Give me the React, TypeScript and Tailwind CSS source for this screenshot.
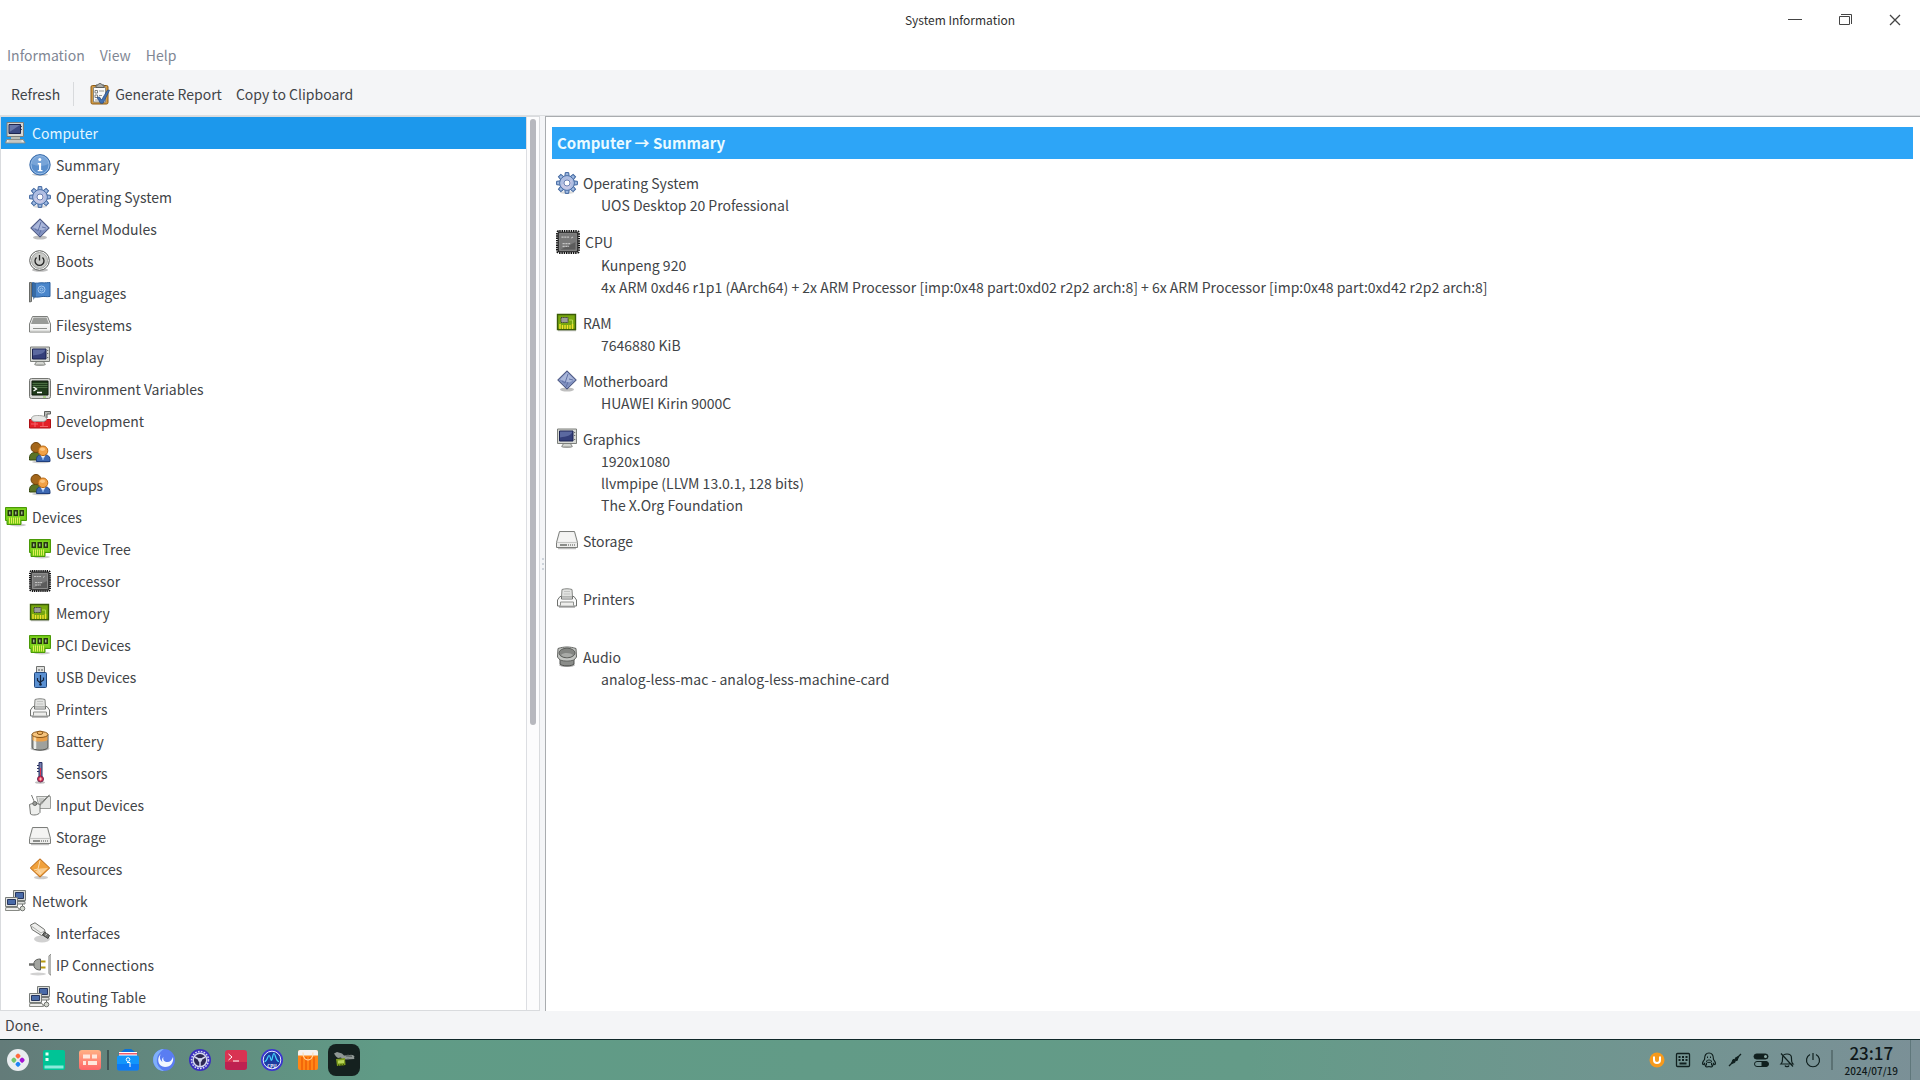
import React, { useState } from 'react';

type IconName =
  | 'computer' | 'info' | 'gear' | 'module' | 'boot' | 'flag' | 'drive' | 'display' | 'terminal'
  | 'devel' | 'users' | 'card' | 'cpu' | 'memory' | 'usb' | 'printer' | 'battery' | 'sensor'
  | 'input' | 'storage' | 'resources' | 'network' | 'interface' | 'plug' | 'audio' | 'report';

const GEAR_TEETH = [0, 45, 90, 135, 180, 225, 270, 315];

const cardArt = (
  <>
    <ellipse cx="13" cy="19" rx="8" ry="1.5" fill="#000" opacity=".2" />
    <path d="M.5 1.500h21v13h-5.500v4h-14v-4H.5z" fill="#73c916" stroke="#4a9a06" />
    <path d="M2 3h18v10H2z" fill="#86d926" opacity=".6" />
    <path d="M2.500 4h4.500v6H2.500zM8.500 4H13v6H8.500zM14.500 4H19v6h-4.500z" fill="#25370f" />
    <path d="M4 5.500h1.500v3H4zM10 5.500h1.500v3H10zM16 5.500h1.500v3H16z" fill="#9fb18c" />
    <path d="M4.500 11.500v6M6.500 11.500v6M8.500 11.500v6M10.500 11.500v6M12.500 11.500v6M14.500 11.500v6" stroke="#e2ee58" />
  </>
);

const monitorPair = (
  <>
    <path d="M8.500.500h12v10h-12z" fill="#d8dad6" stroke="#777b78" />
    <path d="M10.500 2.500h8v6h-8z" fill="#4a6ba8" stroke="#27365f" />
    <path d="M10 11.500h10v2.500H10z" fill="#dcdedb" stroke="#777b78" />
    <path d="M.5 7.500h12v9H.5z" fill="#e3e4e2" stroke="#777b78" />
    <path d="M2.500 9.500h8v5h-8z" fill="#4a6ba8" stroke="#27365f" />
    <path d="M.8 17.500h12.400l1.300 3H.5z" fill="#eeeeec" stroke="#888a85" />
    <circle cx="17.500" cy="18.500" r="2.300" fill="#d3d7cf" stroke="#6f726e" />
    <path d="M17.500 14v2M14 19h1" stroke="#6f726e" />
  </>
);

const ICONS: Record<IconName, React.ReactNode> = {
  computer: (
    <>
      <path d="M2 .500h16.500v14H2z" fill="#d6d7d4" stroke="#7b7d7a" />
      <path d="M4 2.500h11.500v9H4z" fill="#3c4b85" stroke="#1d2550" />
      <path d="M4.500 3h10.500l-10.500 7z" fill="#8b9cc8" opacity=".55" />
      <path d="M16.500 4v1M16.500 7v1" stroke="#555" />
      <path d="M6 15h9v2H6z" fill="#babdb6" />
      <path d="M1.800 17.500h16.400l2 3.500H.5z" fill="#e6e6e3" stroke="#888a85" />
      <path d="M3.500 19h13" stroke="#a5a7a2" />
    </>
  ),
  info: (
    <>
      <ellipse cx="11" cy="20.500" rx="8" ry="1.500" fill="#000" opacity=".2" />
      <circle cx="11" cy="10.800" r="10.200" fill="#5a8fcd" stroke="#3a6caa" />
      <circle cx="11" cy="10.800" r="9" fill="none" stroke="#9bbfe8" />
      <path d="M2.500 10a8.500 8.500 0 0 1 17 0c-5 2.500-11 2.500-17 0z" fill="#8ab2e0" opacity=".6" />
      <circle cx="10.800" cy="5.500" r="1.500" fill="#fff" />
      <path d="M8.800 9h3.300v7h1.400v1.300H8.700V16H10v-5.600H8.800z" fill="#fff" />
    </>
  ),
  gear: (
    <>
      <ellipse cx="11" cy="20.500" rx="7" ry="1.300" fill="#000" opacity=".15" />
      {GEAR_TEETH.map((a) => (
        <path key={a} d="M8.800 5 9.300.600h3.400l.5 4.400z" fill="#9db8e0" stroke="#3f659f" transform={`rotate(${a} 11 11)`} />
      ))}
      <circle cx="11" cy="11" r="7.300" fill="#a4b8de" stroke="#4468a0" />
      <circle cx="11" cy="11" r="6.700" fill="#afbee2" />
      <path d="M5 13a6 6 0 0 0 9 3l2-8z" fill="#cdcae6" opacity=".8" />
      <circle cx="11" cy="11" r="3" fill="#fff" stroke="#6d82b3" />
    </>
  ),
  module: (
    <>
      <ellipse cx="11" cy="19.500" rx="7" ry="2" fill="#000" opacity=".25" />
      <path d="M11 .800 20.300 10 11 19.200 1.700 10z" fill="#8090bf" stroke="#3b4672" />
      <path d="M11 2.500 18.500 10 13 12.500 8 11 4 9.500z" fill="#aab7da" />
      <path d="M12 4 9 13l-3-2M12 12l-2 5M13 9l4 1" stroke="#6273a6" fill="none" />
    </>
  ),
  boot: (
    <>
      <ellipse cx="11" cy="20" rx="8" ry="1.800" fill="#000" opacity=".25" />
      <circle cx="10.500" cy="10.500" r="9.800" fill="#fafafa" stroke="#595b58" />
      <circle cx="10.500" cy="10.500" r="8" fill="#c9cac7" stroke="#a0a29f" />
      <path d="M7.500 7.500a4.500 4.500 0 1 0 6 0M10.500 5v5.500" fill="none" stroke="#222" strokeWidth="1.300" />
    </>
  ),
  flag: (
    <>
      <path d="M.5.500h2v19l-2 .5z" fill="#9b9d99" stroke="#686a67" />
      <path d="M3.500.500c4 1.500 7 0 9.500.300 3 .3 6-.3 8-.3v14c-4 .5-6-.5-9 .2-3 .6-5 .5-8.500 0z" fill="#4a86cb" stroke="#2b5f9e" />
      <path d="M4 1h3v13.500L4 18z" fill="#2c5a8c" opacity=".6" />
      <circle cx="12.500" cy="7.500" r="3.500" fill="none" stroke="#a4c8ef" />
      <circle cx="12.500" cy="7.500" r="1.500" fill="none" stroke="#a4c8ef" />
    </>
  ),
  drive: (
    <>
      <path d="M3.500 2.500h15L21.500 10v8h-21v-8z" fill="#f1f1f0" stroke="#7c7e7b" />
      <path d="M4.500 3.500h13l2.500 6.500H2z" fill="#999b98" />
      <path d="M1 11h20" stroke="#fff" />
      <path d="M4 14.500h14" stroke="#8b8d8a" />
      <path d="M1 17h20" stroke="#cfd0ce" />
    </>
  ),
  display: (
    <>
      <ellipse cx="11" cy="18.500" rx="6" ry="1.500" fill="#000" opacity=".3" />
      <path d="M7 15h8v2c1.500.300 1.500 2-.500 2h-7c-2 0-2-1.700-.5-2z" fill="#d3d5d1" stroke="#888a85" />
      <path d="M1.500 1h19v14.500h-19z" fill="#d6d8d4" stroke="#7c7f7b" />
      <path d="M3.500 3h13.500v10H3.500z" fill="#343f7a" stroke="#1b2350" />
      <path d="M4 3.500h12.500c-1 4-6 5-12.500 6z" fill="#7c8cc0" opacity=".55" />
      <path d="M18.700 4v1M18.700 7v1M18.700 11v1" stroke="#555" />
    </>
  ),
  terminal: (
    <>
      <rect x=".5" y=".500" width="21" height="20" rx="2" fill="#d5d6d3" stroke="#747672" />
      <path d="M3 3h16v14H3z" fill="#1e3a1a" stroke="#0e1a0c" />
      <path d="M3.500 5.500h15M3.500 7.500h15M3.500 9.500h15" stroke="#4a6e42" />
      <path d="M4.500 9 7.500 11l-3 2M8 14.500h5" stroke="#fff" fill="none" strokeWidth="1.300" />
      <path d="M14 19h3" stroke="#7ecb3b" />
    </>
  ),
  devel: (
    <>
      <path d="M15.500 8V1.500h6V4H18v4" fill="#b5b7b3" stroke="#5d5f5c" />
      <path d="M.5 9.500h5v2h11v-2h5v8.500H.5z" fill="#e32128" stroke="#ad1015" />
      <path d="M2 14h7M11 16.500h8M6 12v5M14 12v5" stroke="#f7656a" />
      <path d="M2.500 9c0-3 3-3.500 6-3.500 5 0 9 1 9 3.500s-4 2.800-8 2.500c-3-.2-7 .5-7-2.500z" fill="#e6e7e5" stroke="#a2a4a1" />
    </>
  ),
  users: (
    <>
      <ellipse cx="12" cy="20" rx="9" ry="1.300" fill="#000" opacity=".2" />
      <path d="M.5 18c-.3-5 1-7.500 6-7.500s7 2.500 6.500 7.500z" fill="#5a7326" stroke="#35480f" />
      <circle cx="7" cy="5.500" r="5" fill="#a4661a" stroke="#714309" />
      <path d="M7.500 19.500c-.3-5 1-7 6.500-7s7.300 2 7 7z" fill="#3d68b2" stroke="#203f7c" />
      <path d="M11.500 12.800h5L14 18z" fill="#fff" />
      <path d="M14 14l-1 4h2z" fill="#6b9be0" />
      <circle cx="14" cy="8.800" r="4.800" fill="#f2a146" stroke="#bc6a12" />
      <ellipse cx="13.500" cy="7.300" rx="2.500" ry="1.800" fill="#ffd08d" opacity=".8" />
    </>
  ),
  card: cardArt,
  cpu: (
    <>
      <rect x="1" y="1" width="20" height="20" rx="2" fill="none" stroke="#111" strokeWidth="2" strokeDasharray="1.300 .8" />
      <rect x="2" y="2" width="18" height="18" rx="1.500" fill="#5c5c5c" stroke="#222" />
      <path d="M3.500 3.500h15v15h-15z" fill="none" stroke="#8d8d8d" />
      <path d="M4 4h14v7L4 18z" fill="#8c8c8c" opacity=".6" />
      <path d="M5 6.500h7M14 7.500l2-1.500M6 12.500h7M6 15h6" stroke="#c4c4c4" strokeDasharray="2 .6" />
    </>
  ),
  memory: (
    <>
      <path d="M2 18.500h18" stroke="#000" opacity=".25" strokeWidth="1.500" />
      <path d="M1.500 2.500h18v15h-18z" fill="#78a80f" stroke="#3b5c06" strokeWidth="1.400" />
      <path d="M4 12v5M6.500 13v4M9 13v4M11.500 13v4M14 13v4M16.500 12v5" stroke="#f3e02c" strokeWidth="1.400" />
      <path d="M5 5.500h7v5H5z" fill="#9b9d99" stroke="#3c3e3b" strokeDasharray="1.400 .8" />
      <path d="M13 8h3.500v4" stroke="#b7d94c" fill="none" />
    </>
  ),
  usb: (
    <>
      <path d="M7.500.500h8v7h-8z" fill="#dfe0de" stroke="#707270" />
      <path d="M9.500 3h1v2h-1zM12.500 3h1v2h-1z" fill="#555" />
      <rect x="5.500" y="6.500" width="12" height="15" rx="1" fill="#5a90d2" stroke="#21477c" />
      <path d="M11.500 9v10M11.500 17 8.500 14.500V12M11.500 16l3-2v-2.500" stroke="#14243c" strokeWidth="1.200" fill="none" />
      <circle cx="11.500" cy="18.500" r="1.300" fill="#14243c" />
    </>
  ),
  printer: (
    <>
      <path d="M3 19h16" stroke="#000" opacity=".25" strokeWidth="2" />
      <path d="M5.500 9 6 1.500c3-1 7-1 10 0l.5 7.500z" fill="#e2e3e1" stroke="#858784" />
      <path d="M4 8.500h1.500V11h11V8.500H18l2.500 3.500v6h-19v-6z" fill="#fafafa" stroke="#6f716e" />
      <path d="M4.500 17.500V14h13v3.500" fill="#eeeeec" stroke="#8e908d" />
      <path d="M8 3.500h6M7.800 6h6.400" stroke="#c2c3c1" />
    </>
  ),
  battery: (
    <>
      <ellipse cx="11" cy="18.500" rx="9.500" ry="2.500" fill="#000" opacity=".25" />
      <path d="M3 4.500v13c2 3.500 14 3.500 16 0v-13z" fill="#9fa19d" stroke="#4e504d" />
      <path d="M6 9v10" stroke="#eceeeb" strokeWidth="2.500" />
      <path d="M3.500 5v5c2 2 13 2 15 0V5z" fill="#e9a04a" />
      <path d="M6 6v5" stroke="#ffdca3" strokeWidth="2.500" />
      <ellipse cx="11" cy="4.500" rx="8" ry="3" fill="#f6c47d" stroke="#8a5414" />
      <ellipse cx="11" cy="2.800" rx="2.800" ry="1.700" fill="#f2b765" stroke="#8a5414" />
    </>
  ),
  sensor: (
    <>
      <ellipse cx="11" cy="20.500" rx="5" ry="1.200" fill="#000" opacity=".25" />
      <path d="M10 .500h3v14h-3z" fill="#777fae" stroke="#262f61" />
      <path d="M8 3.500h2M8 6.500h2M8 9.500h2" stroke="#262f61" />
      <path d="M11.500 6v10" stroke="#dd3150" />
      <circle cx="11.500" cy="17" r="3" fill="#dd3150" stroke="#6c2a55" />
      <path d="M10 17h3M11.500 15.500v3" stroke="#fbb" />
    </>
  ),
  input: (
    <>
      <path d="M7.500 2.500h14v12h-11z" fill="#e4e5e3" stroke="#9a9c99" />
      <path d="M2.500 1c1 3 2 4 3 8" stroke="#757774" fill="none" />
      <path d="M20.500 1 12 10.500l-1.500 1 .5-2z" fill="#cfd0ce" stroke="#777976" />
      <path d="M10 5h5M10 7h3" stroke="#a9aba8" />
      <path d="M.5 10.500c3-1.500 7-1.500 10.500 0v8c-2 3-8 3-9.500 1.500z" fill="#eeefed" stroke="#757774" />
      <circle cx="5.800" cy="9.500" r="2" fill="#9a9c99" stroke="#666865" />
    </>
  ),
  storage: (
    <>
      <path d="M2 18.500h18" stroke="#000" opacity=".25" strokeWidth="1.500" />
      <path d="M3.500 1.500h15l3 11v5H.5v-5z" fill="#ededec" stroke="#7c7e7b" />
      <path d="M4.500 2.500h13l2.500 9H2z" fill="#f4f4f3" />
      <path d="M1 12.500h20" stroke="#c5c6c4" />
      <path d="M4 15h7" stroke="#8b8d8a" strokeWidth="2" />
      <path d="M12 15h7" stroke="#9b9d9a" strokeWidth="2" strokeDasharray="1 1" />
    </>
  ),
  resources: (
    <>
      <ellipse cx="12" cy="19.500" rx="7" ry="1.800" fill="#000" opacity=".2" />
      <path d="M11 .800 20.700 10 11 19.200 1.300 10z" fill="#f0a13c" stroke="#b8640f" />
      <path d="M11 10.500 19 10l-8 7.500-5-4z" fill="#fbd49b" opacity=".85" />
      <path d="M11 2.500 9 11l-4 1M9 11l3 5" stroke="#fbdcae" fill="none" />
    </>
  ),
  network: monitorPair,
  interface: (
    <>
      <ellipse cx="13" cy="17" rx="8" ry="3.500" fill="#000" opacity=".18" />
      <path d="M1.500 3 6 .800l9.500 6.700 1 4.500-4 1.500L3 7.500z" fill="#eeeeec" stroke="#6f716e" />
      <path d="M3 4.500 12 11l3.500-2" stroke="#a9aba8" fill="none" />
      <path d="M15.500 10l5 3.500-1.500 3-5.500-3.500z" fill="#6d6f6c" stroke="#3f413e" />
      <path d="M16.500 13.500l1.500-2" stroke="#ccc" />
    </>
  ),
  plug: (
    <>
      <ellipse cx="9" cy="20" rx="8" ry="1.500" fill="#000" opacity=".18" />
      <path d="M0 10.500h6" stroke="#6b6d6a" strokeWidth="2.500" />
      <path d="M5 8.500c1-3 4-3.500 6.500-3.500v11C9 16 6 15.500 5 12.500z" fill="#a3a5a0" stroke="#5d5f5c" />
      <path d="M12 7.500h4.500M12 13.500h4.500" stroke="#b79a10" strokeWidth="2" />
      <path d="M20 2c1-1.500 1.500-1.500 2-2v21c-1 0-2-1-2-2z" fill="#eeeeec" stroke="#7d7f7c" />
    </>
  ),
  audio: (
    <>
      <ellipse cx="11" cy="19" rx="8" ry="2" fill="#000" opacity=".3" />
      <path d="M4 12h14v6c-2 2.500-12 2.500-14 0z" fill="#8b8d8a" stroke="#4f514e" />
      <path d="M2 2.500c6-2 12-2 18 0l.5 8.500-2.500 3c-4 1.500-10 1.500-14 0l-2.500-3z" fill="#c3c5c2" stroke="#636562" />
      <ellipse cx="11" cy="7" rx="8" ry="4.800" fill="#838582" stroke="#5d5f5c" />
      <path d="M5 9c3 3 9 3 12 0-2-2-9-3-12 0z" fill="#a8aaa7" />
    </>
  ),
  report: (
    <>
      <rect x="2" y="2.500" width="17" height="18.500" rx="1.500" fill="#d29a45" stroke="#8b5a14" />
      <path d="M4.500 4.500h12v14.500h-12z" fill="#fafafa" stroke="#888a85" />
      <path d="M7 4.500V2h2c0-2 4-2 4 0h2v2.500z" fill="#a9aba8" stroke="#5d5f5c" />
      <path d="M6 7.500h2.500V10H6zM6 12h2.500v2.500H6z" fill="#fff" stroke="#666865" strokeWidth=".8" />
      <path d="M10 8h5M10 12.500h3M6 17h3" stroke="#999b98" />
      <path d="m8 14.500 2.500-.5 2 3L18.500 7l2 .3-6.500 13h-2.500z" fill="#4271b3" stroke="#24477c" strokeWidth=".7" />
    </>
  ),
};

function Icon({ name, large = false }: { name: IconName; large?: boolean }) {
  return (
    <svg viewBox="0 0 22 22" className={large ? 'size-6 shrink-0' : 'size-[22px] shrink-0'} aria-hidden="true">
      {ICONS[name]}
    </svg>
  );
}

interface TreeItem {
  id: string;
  label: string;
  icon: IconName;
  root?: boolean;
}

const TREE: TreeItem[] = [
  { id: 'computer', label: 'Computer', icon: 'computer', root: true },
  { id: 'summary', label: 'Summary', icon: 'info' },
  { id: 'os', label: 'Operating System', icon: 'gear' },
  { id: 'modules', label: 'Kernel Modules', icon: 'module' },
  { id: 'boots', label: 'Boots', icon: 'boot' },
  { id: 'languages', label: 'Languages', icon: 'flag' },
  { id: 'filesystems', label: 'Filesystems', icon: 'drive' },
  { id: 'display', label: 'Display', icon: 'display' },
  { id: 'env', label: 'Environment Variables', icon: 'terminal' },
  { id: 'devel', label: 'Development', icon: 'devel' },
  { id: 'users', label: 'Users', icon: 'users' },
  { id: 'groups', label: 'Groups', icon: 'users' },
  { id: 'devices', label: 'Devices', icon: 'card', root: true },
  { id: 'dtree', label: 'Device Tree', icon: 'card' },
  { id: 'processor', label: 'Processor', icon: 'cpu' },
  { id: 'memory', label: 'Memory', icon: 'memory' },
  { id: 'pci', label: 'PCI Devices', icon: 'card' },
  { id: 'usb', label: 'USB Devices', icon: 'usb' },
  { id: 'printers', label: 'Printers', icon: 'printer' },
  { id: 'battery', label: 'Battery', icon: 'battery' },
  { id: 'sensors', label: 'Sensors', icon: 'sensor' },
  { id: 'input', label: 'Input Devices', icon: 'input' },
  { id: 'storage', label: 'Storage', icon: 'storage' },
  { id: 'resources', label: 'Resources', icon: 'resources' },
  { id: 'network', label: 'Network', icon: 'network', root: true },
  { id: 'interfaces', label: 'Interfaces', icon: 'interface' },
  { id: 'ip', label: 'IP Connections', icon: 'plug' },
  { id: 'routing', label: 'Routing Table', icon: 'network' },
];

interface Section {
  title: string;
  icon: IconName;
  large?: boolean;
  values: string[];
}

const SECTIONS: Section[] = [
  { title: 'Operating System', icon: 'gear', values: ['UOS Desktop 20 Professional'] },
  {
    title: 'CPU',
    icon: 'cpu',
    large: true,
    values: [
      'Kunpeng 920',
      '4x ARM 0xd46 r1p1 (AArch64) + 2x ARM Processor [imp:0x48 part:0xd02 r2p2 arch:8] + 6x ARM Processor [imp:0x48 part:0xd42 r2p2 arch:8]',
    ],
  },
  { title: 'RAM', icon: 'memory', values: ['7646880 KiB'] },
  { title: 'Motherboard', icon: 'module', values: ['HUAWEI Kirin 9000C'] },
  { title: 'Graphics', icon: 'display', values: ['1920x1080', 'llvmpipe (LLVM 13.0.1, 128 bits)', 'The X.Org Foundation'] },
  { title: 'Storage', icon: 'storage', values: [''] },
  { title: 'Printers', icon: 'printer', values: [''] },
  { title: 'Audio', icon: 'audio', values: ['analog-less-mac - analog-less-machine-card'] },
];

function TitleBar() {
  return (
    <header className="grid h-10 shrink-0 grid-cols-[1fr_auto_1fr] items-center">
      <span />
      <h1 className="text-xs text-[#303030]">System Information</h1>
      <div className="flex justify-end">
        <button aria-label="Minimize" className="flex h-10 w-[50px] items-center justify-center">
          <svg viewBox="0 0 16 16" className="size-4" fill="none" stroke="#444"><path d="M1 7.500h14" /></svg>
        </button>
        <button aria-label="Restore" className="flex h-10 w-[50px] items-center justify-center">
          <svg viewBox="0 0 16 16" className="size-4" fill="none" stroke="#444"><path d="M2.500 4.500h10v8h-10zM4 2.500h10.500V12" /></svg>
        </button>
        <button aria-label="Close" className="flex h-10 w-[50px] items-center justify-center">
          <svg viewBox="0 0 16 16" className="size-4" fill="none" stroke="#444" strokeWidth="1.300"><path d="m3 3 10 10M13 3 3 13" /></svg>
        </button>
      </div>
    </header>
  );
}

function Toolbar() {
  return (
    <div className="flex h-[46px] shrink-0 items-center border-b border-[#dcdee0] bg-[#f4f5f7] pt-0.5 pl-[11px]">
      <button>Refresh</button>
      <span className="mr-[15px] ml-[13px] h-6 w-px bg-[#d8dadd]" />
      <button className="flex items-center gap-1">
        <Icon name="report" />
        Generate Report
      </button>
      <button className="ml-[14px]">Copy to Clipboard</button>
    </div>
  );
}

function Sidebar({ active, onSelect }: { active: string; onSelect: (id: string) => void }) {
  return (
    <aside className="flex w-[540px] shrink-0 border border-[#d9dbde] bg-white">
      <nav className="min-w-0 flex-1 overflow-hidden">
        {TREE.map((item) => (
          <button
            key={item.id}
            onClick={() => onSelect(item.id)}
            className={`flex h-8 w-full items-center gap-[5px] text-left ${item.root ? 'pl-1' : 'pl-7'} ${
              active === item.id ? 'bg-[#1c98ec] text-[#e4f6ff]' : ''
            }`}
          >
            <Icon name={item.icon} />
            <span>{item.label}</span>
          </button>
        ))}
      </nav>
      <div className="flex w-[13px] justify-center border-l border-[#dcdee2] bg-[#fcfcfd] pt-0.5">
        <span className="h-[68%] w-1.5 rounded-full bg-[#b7b8be]" />
      </div>
    </aside>
  );
}

function Details() {
  return (
    <main className="min-w-0 flex-1 border-t border-l border-[#a9acaf] bg-white pt-2.5 pr-[7px] pl-1.5">
      <h2 className="flex h-8 items-center bg-[#2da5f7] pl-[5px] text-[15px] font-bold text-[#eafaff]">
        Computer → Summary
      </h2>
      <div className="flex flex-col gap-3.5 pt-[13px] pl-1 leading-[22px]">
        {SECTIONS.map((s) => (
          <section key={s.title}>
            <h3 className="flex items-center gap-[5px]">
              <Icon name={s.icon} large={s.large} />
              {s.title}
            </h3>
            {s.values.map((v) => (
              <p key={v} className="min-h-[22px] pl-[45px]">{v}</p>
            ))}
          </section>
        ))}
      </div>
    </main>
  );
}

const APPS: { name: string; art: React.ReactNode }[] = [
  {
    name: 'Launcher',
    art: (
      <>
        <circle cx="11" cy="11" r="11" fill="#e9edf0" />
        <g transform="rotate(45 11 11)">
          <rect x="6" y="6" width="4.400" height="4.400" rx="1.500" fill="#ff6a3c" />
          <rect x="11.800" y="6" width="4.400" height="4.400" rx="1.500" fill="#a413d6" />
          <rect x="6" y="11.800" width="4.400" height="4.400" rx="1.500" fill="#74c66a" />
          <rect x="11.800" y="11.800" width="4.400" height="4.400" rx="1.500" fill="#1d83f5" />
        </g>
      </>
    ),
  },
  {
    name: 'Show Desktop',
    art: (
      <>
        <rect y="1" width="22" height="20" rx="2" fill="#00c496" />
        <path d="M2.500 3.500h3v3h-3zM2.500 9h3v3h-3z" fill="#e8fff6" />
        <path d="M1.500 16.500h19v3h-19z" fill="#8aeadb" />
      </>
    ),
  },
  {
    name: 'Multitasking View',
    art: (
      <>
        <defs>
          <linearGradient id="mtv" x2="0" y2="1">
            <stop stopColor="#ffb184" />
            <stop offset="1" stopColor="#ff6568" />
          </linearGradient>
        </defs>
        <rect y="1" width="22" height="20" rx="3" fill="url(#mtv)" />
        <path d="M4 5.500h7v4H4zM13 5.500h5v4h-5zM4 12h3v4H4zM9 12h9v4H9z" fill="#ffe7dc" />
      </>
    ),
  },
  {
    name: 'File Manager',
    art: (
      <>
        <path d="M1 5 8 0h6l7 5z" fill="#0a70d8" />
        <path d="M2 3h18v5H2z" fill="#fff" />
        <path d="M2 4h18v1.500H2z" fill="#f05c6c" />
        <rect y="6.500" width="22" height="15" rx="2" fill="#1296fb" />
        <path d="M0 15h22v4.500a2 2 0 0 1-2 2H2a2 2 0 0 1-2-2z" fill="#075df0" opacity=".5" />
        <circle cx="11" cy="10.500" r="1.800" fill="none" stroke="#fff" />
        <path d="M10 13.500h3V18" stroke="#fff" fill="none" />
      </>
    ),
  },
  {
    name: 'Browser',
    art: (
      <>
        <circle cx="11" cy="11" r="11" fill="#5a7df2" />
        <path d="M11 0C3 0-2 8 1 15c2 5 6 7 10 7-5-3-8-7-7-12 .7-5 4-8 7-10z" fill="#7fb0fa" />
        <path d="M8 5C3 9 5 18 12 18c6 0 9-5 8-10-1 3-3 5-5.500 5-3 0-5-2-4-5-1.500 1-2 3-1 5C7 11 6 8 8 5z" fill="#f2f7ff" />
      </>
    ),
  },
  {
    name: 'Control Center',
    art: (
      <>
        <circle cx="11" cy="11" r="11" fill="#3a2fc0" />
        <circle cx="11" cy="11" r="8.500" fill="none" stroke="#d4d8ee" strokeWidth="1.500" strokeDasharray="1.700 1.200" />
        <circle cx="11" cy="11" r="6.800" fill="#2c2854" stroke="#d4d8ee" strokeWidth="1.500" />
        <path d="M11 11v6M11 11 6 8M11 11l5-3" stroke="#d4d8ee" strokeWidth="1.500" />
        <circle cx="11" cy="11" r="2" fill="#d4d8ee" />
      </>
    ),
  },
  {
    name: 'Terminal',
    art: (
      <>
        <rect y="1" width="22" height="20" rx="3" fill="#d93352" />
        <path d="M0 13h22v5a3 3 0 0 1-3 3H3a3 3 0 0 1-3-3z" fill="#ad1552" opacity=".6" />
        <path d="m3.500 5 3.500 3-3.500 3M8 12h6" fill="none" stroke="#fff" />
      </>
    ),
  },
  {
    name: 'System Monitor',
    art: (
      <>
        <circle cx="11" cy="11" r="11" fill="#3b35cf" />
        <circle cx="11" cy="11" r="8.800" fill="#1c3aa0" stroke="#e2e8ff" />
        <path d="M3.500 12.500c3 0 3-6 4.500-6s1.500 5 2.500 5 1-7 2.500-7 1.500 8 5 8" fill="none" stroke="#45d6ff" strokeWidth="1.200" />
        <text x="11" y="18.500" textAnchor="middle" fontSize="4.500" fontWeight="700" fill="#fff">CPU</text>
      </>
    ),
  },
  {
    name: 'App Store',
    art: (
      <>
        <rect x="1" y="1" width="20" height="20" rx="2" fill="#ff8616" />
        <path d="M1 6.500V3a2 2 0 0 1 2-2h16a2 2 0 0 1 2 2v3.500z" fill="#f4f1ee" />
        <path d="M5 8v13M9 8v13M13 8v13M17 8v13" stroke="#f05f08" strokeWidth="1.500" />
        <path d="M6 3.500c0 10 10 10 10 0" fill="none" stroke="#ffd9b0" strokeWidth="1.200" />
      </>
    ),
  },
];

const TRAY: { name: string; art: React.ReactNode }[] = [
  {
    name: 'Assistant',
    art: (
      <>
        <circle cx="8" cy="8" r="7.500" fill="#f79a1c" stroke="none" />
        <path d="M5 4.500V8c0 4 6 4 6 0V4.500" stroke="#fff" strokeWidth="2" />
      </>
    ),
  },
  {
    name: 'Keyboard',
    art: (
      <>
        <rect x="1.500" y="1.500" width="13" height="13" rx="1" strokeWidth="1.300" />
        <path d="M3.500 5h2M7 5h2M10.500 5h2M3.500 8h2M7 8h2M10.500 8h2M4.500 11.500h7" strokeWidth="1.800" />
      </>
    ),
  },
  {
    name: 'Messenger',
    art: (
      <>
        <path d="M3.500 7.500C3.500 3 5 1 8 1s4.500 2 4.500 6.500c2 2.500 2.500 4.500 1.500 5-.7.300-1.300-.7-1.600-1-.2 1.500-.9 2-.9 2.500 0 1-2 1-3.500.5C6.500 15 4.500 15 4.500 14c0-.5-.7-1-.9-2.500-.3.300-.9 1.300-1.600 1-1-.5-.5-2.500 1.500-5z" strokeWidth="1.200" />
        <path d="M5 9.500c2-2 4-2 6 0-1 1.300-5 1.300-6 0zM5.500 11v2.500M10.500 11v2.500M6.500 4.500v1.500M9.500 4.500v1.500" />
      </>
    ),
  },
  {
    name: 'Connection',
    art: (
      <>
        <path d="m2 14 4-4M10 6l4-4" strokeWidth="1.300" />
        <path d="M4.500 11.500 6 7.500l2 .3.500-2 3-1.300-1.300 4-2 .2-.4 1.800z" fill="#10201f" />
      </>
    ),
  },
  {
    name: 'Switches',
    art: (
      <>
        <rect x="1" y="2" width="14" height="5" rx="2.500" fill="#10201f" />
        <circle cx="12.500" cy="4.500" r="1.500" fill="#8aa9a5" stroke="none" />
        <rect x="1.500" y="9.500" width="13" height="5" rx="2.500" />
        <path d="M9 9.500h4a2 2 0 0 1 0 5H9z" fill="#10201f" />
      </>
    ),
  },
  {
    name: 'Notifications',
    art: <path d="M2 12h12c-2-2-1.500-4-1.500-6C12.500 3 10.500 2 8 2S3.500 3 3.500 6c0 2 .5 4-1.500 6zM6 13.500c.5 1.500 3.500 1.500 4 0M2 1.500l12 13" strokeWidth="1.200" />,
  },
  { name: 'Power', art: <path d="M5 2.500a6.500 6.500 0 1 0 6 0M8 1v7" strokeWidth="1.200" /> },
];

function Taskbar() {
  return (
    <footer className="flex h-[41px] shrink-0 items-center border-t border-[#10282a] bg-[linear-gradient(to_right,#637b79_0%,#609b86_20%,#649b88_65%,#7b9097_100%)]">
      <div className="flex items-center gap-3.5 pl-[7px]">
        {APPS.map((app, i) => (
          <React.Fragment key={app.name}>
            {i === 3 && <span className="-mr-1.5 -ml-2 h-5 w-0.5 bg-[#3f5553]" />}
            <button aria-label={app.name}>
              <svg viewBox="0 0 22 22" className="size-[22px]">{app.art}</svg>
            </button>
          </React.Fragment>
        ))}
      </div>
      <button aria-label="System Information" className="ml-[9px] flex size-8 items-center justify-center rounded-lg bg-[#15211f]">
        <svg viewBox="0 0 22 22" className="size-[22px]">
          <path d="M1 4.500 4 3l5 1.500 2 2 9-.5 1.500 1.500-.5 1.500.5 1-9 .5-1.500-1-2 .5-1-1.500-3 .5L3 7.500z" fill="#8f9794" />
          <path d="m13 7 6 .5M15 5.500v1M18 5.500v1M15 9.500v1" stroke="#59625f" />
          <path d="m3 10 9-1 .5 7L4 17z" fill="#7d9c1e" />
          <path d="m5 11.500 6-.5v3l-6 .5z" fill="#b9d558" />
          <path d="M5.500 15.500v1.500M8 15v2M10.500 15v2" stroke="#3b5306" />
        </svg>
      </button>
      <div className="ml-auto flex items-center gap-2.5">
        {TRAY.map((t) => (
          <button key={t.name} aria-label={t.name}>
            <svg viewBox="0 0 16 16" className="size-4" fill="none" stroke="#10201f">{t.art}</svg>
          </button>
        ))}
      </div>
      <span className="ml-[10px] h-5 w-0.5 bg-[#5b7173]" />
      <div className="mx-3 flex flex-col items-center font-medium text-[#0f1819]">
        <time className="text-[17px] leading-[22px]">23:17</time>
        <time className="text-[10px] leading-[14px]">2024/07/19</time>
      </div>
      <button aria-label="Show Desktop" className="h-10 w-2.5 border-l border-[#5f777b]" />
    </footer>
  );
}

export default function App() {
  const [active, setActive] = useState('computer');

  return (
    <div className="flex h-screen flex-col bg-white font-['Noto_Sans_CJK_SC','Noto_Sans',sans-serif] text-sm text-[#414447]">
      <TitleBar />
      <nav className="flex h-[30px] shrink-0 items-center gap-[15px] pl-[7px] text-[#7f8794]">
        <button>Information</button>
        <button>View</button>
        <button>Help</button>
      </nav>
      <Toolbar />
      <div className="flex min-h-0 flex-1 bg-[#f4f5f7]">
        <Sidebar active={active} onSelect={setActive} />
        <div className="flex w-[5px] shrink-0 flex-col items-center justify-center gap-[3px]">
          <span className="size-0.5 bg-[#cdd3da]" />
          <span className="size-0.5 bg-[#cdd3da]" />
          <span className="size-0.5 bg-[#cdd3da]" />
        </div>
        <Details />
      </div>
      <div className="flex h-7 shrink-0 items-center bg-[#f4f5f7] pl-[5px]">Done.</div>
      <Taskbar />
    </div>
  );
}
